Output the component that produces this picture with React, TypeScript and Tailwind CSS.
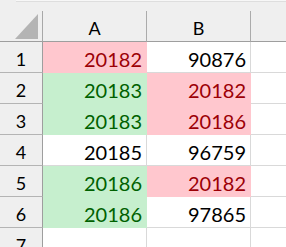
import React from 'react';

type Tone = 'none' | 'bad' | 'good';

const rows: { n: number; a: [string, Tone]; b: [string, Tone] }[] = [
  { n: 1, a: ['20182', 'bad'], b: ['90876', 'none'] },
  { n: 2, a: ['20183', 'good'], b: ['20182', 'bad'] },
  { n: 3, a: ['20183', 'good'], b: ['20186', 'bad'] },
  { n: 4, a: ['20185', 'none'], b: ['96759', 'none'] },
  { n: 5, a: ['20186', 'good'], b: ['20182', 'bad'] },
  { n: 6, a: ['20186', 'good'], b: ['97865', 'none'] },
];

const toneClass: Record<Tone, string> = {
  none: 'bg-white text-black border-[#d9d9d9]',
  bad: 'bg-[#ffc7ce] text-[#9c0006] border-[#ffc7ce]',
  good: 'bg-[#c6efce] text-[#006100] border-[#c6efce]',
};

function Cell({ value, tone }: { value: string; tone: Tone }) {
  return (
    <div
      className={`h-[31px] border-r border-b flex items-center justify-end pr-[4px] pt-[3px] text-[20px] leading-none ${toneClass[tone]}`}
    >
      {value}
    </div>
  );
}

function RowHead({ n }: { n: number }) {
  return (
    <div className="h-[31px] bg-[#efefef] border-r border-r-[#9e9e9e] border-b border-b-[#b4b4b4] flex items-center justify-center pt-[3px] text-[18px] leading-none text-black">
      {n}
    </div>
  );
}

export default function App() {
  return (
    <div className="w-[286px] h-[247px] overflow-hidden bg-white font-['Lato','Liberation_Sans',sans-serif]">
      {/* strip above the headers */}
      <div className="h-[11px] bg-[#efefef] flex">
        <div className="w-[16px]" />
        <div className="flex-1 h-[2px] bg-[#f7f7f7] border-b border-[#dedede]" />
      </div>

      <div className="grid grid-cols-[43px_104px_104px_1fr]">
        {/* column headers */}
        <div className="h-[31px] bg-[#efefef] border-r border-r-[#a8a8a8] border-b border-b-[#9e9e9e] flex items-center justify-end pr-[3px]">
          <svg width="24" height="25" viewBox="0 0 24 25">
            <polygon points="23,0 23,25 0,25" fill="#b4b4b4" />
          </svg>
        </div>
        <div className="h-[31px] bg-[#efefef] border-r border-r-[#ababab] border-b border-b-[#9e9e9e] flex items-center justify-center pt-[4px] text-[18px] leading-none text-black">
          A
        </div>
        <div className="h-[31px] bg-[#efefef] border-r border-r-[#ababab] border-b border-b-[#9e9e9e] flex items-center justify-center pt-[4px] text-[18px] leading-none text-black">
          B
        </div>
        <div className="h-[31px] bg-[#efefef] border-b border-b-[#9e9e9e]" />

        {rows.map((r) => (
          <React.Fragment key={r.n}>
            <RowHead n={r.n} />
            <Cell value={r.a[0]} tone={r.a[1]} />
            <Cell value={r.b[0]} tone={r.b[1]} />
            <div className="h-[31px] border-b border-[#d9d9d9]" />
          </React.Fragment>
        ))}

        <RowHead n={7} />
        <div className="h-[31px] border-r border-b border-[#d9d9d9]" />
        <div className="h-[31px] border-r border-b border-[#d9d9d9]" />
        <div className="h-[31px] border-b border-[#d9d9d9]" />
      </div>
    </div>
  );
}
